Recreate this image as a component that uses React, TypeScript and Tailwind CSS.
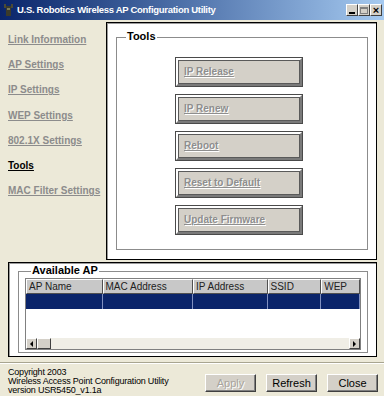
import React from "react";

const navItems = [
  "Link Information",
  "AP Settings",
  "IP Settings",
  "WEP Settings",
  "802.1X Settings",
  "Tools",
  "MAC Filter Settings",
];

const toolButtons = ["IP Release", "IP Renew", "Reboot", "Reset to Default", "Update Firmware"];

const cols = [
  { name: "AP Name", w: 77 },
  { name: "MAC Address", w: 91 },
  { name: "IP Address", w: 75 },
  { name: "SSID", w: 54 },
  { name: "WEP", w: 39 },
];

function WinBtn({ children }: { children: React.ReactNode }) {
  return (
    <div className="w-[12px] h-[12px] bg-[#d4d0c8] border border-t-white border-l-white border-r-[#404040] border-b-[#404040] flex items-center justify-center">
      {children}
    </div>
  );
}

function ToolButton({ label }: { label: string }) {
  return (
    <div className="w-[128px] h-[30px] border border-[#4a4a4a] bg-[#d4d0c8]">
      <div className="w-full h-full border-2 border-t-white border-l-white border-r-[#7a7a7a] border-b-[#7a7a7a]">
        <div className="w-full h-full border border-[#5a5a5a] bg-[#d4d0c8] flex items-center pl-[5px]">
          <span className="text-[10px] font-bold underline text-[#8e8e8e] [text-shadow:1px_1px_0_#ffffff] leading-none">
            {label}
          </span>
        </div>
      </div>
    </div>
  );
}

function FootButton({ label, disabled }: { label: string; disabled?: boolean }) {
  return (
    <div className="w-[51px] h-[18px] bg-[#d4d0c8] border border-t-white border-l-white border-r-[#404040] border-b-[#404040] flex items-center justify-center shadow-[inset_-1px_-1px_0_#808080]">
      <span
        className={
          disabled
            ? "text-[11px] text-[#a8a49c] [text-shadow:1px_1px_0_#ffffff] leading-none"
            : "text-[11px] text-black leading-none"
        }
      >
        {label}
      </span>
    </div>
  );
}

export default function App() {
  return (
    <div
      className="w-[384px] h-[396px] bg-[#ece9d8] flex flex-col overflow-hidden"
      style={{ fontFamily: '"Liberation Sans", Arial, sans-serif' }}
    >
      {/* Title bar */}
      <div className="h-[20px] flex items-center bg-gradient-to-r from-[#0a246a] to-[#a6caf0] pl-[3px] pr-[2px]">
        <svg width="11" height="14" viewBox="0 0 11 14" className="mr-[3px]">
          <rect x="3" y="3" width="5" height="10" fill="#3b3b2b" />
          <rect x="1" y="1" width="2" height="4" fill="#4a4a36" />
          <rect x="8" y="1" width="2" height="4" fill="#4a4a36" />
          <rect x="4" y="5" width="3" height="2" fill="#7a7a5a" />
        </svg>
        <span className="text-[9.5px] font-bold text-white tracking-[-0.3px] leading-none">
          U.S. Robotics Wireless AP Configuration Utility
        </span>
        <div className="ml-auto flex">
          <WinBtn>
            <div className="w-[6px] h-[2px] bg-black mt-[5px]" />
          </WinBtn>
          <WinBtn>
            <div className="w-[8px] h-[7px] border border-[#808080] border-t-2" />
          </WinBtn>
          <WinBtn>
            <span className="text-[11px] font-bold leading-none text-black">×</span>
          </WinBtn>
        </div>
      </div>

      {/* Top area */}
      <div className="flex pt-[2px] pr-[7px]">
        <div className="w-[106px] flex flex-col pl-[8px] pt-[11px] gap-[11.2px]">
          {navItems.map((n) => (
            <span
              key={n}
              className={
                n === "Tools"
                  ? "text-[10px] font-bold underline text-black leading-[14px] whitespace-nowrap"
                  : "text-[10px] font-bold underline text-[#8c8c8c] leading-[14px] whitespace-nowrap"
              }
            >
              {n}
            </span>
          ))}
        </div>
        <div className="w-[271px] h-[238px] bg-white border border-black shadow-[inset_1px_1px_0_#9a9a9a] pl-[9px] pr-[8px] pt-[14px] pb-[9px]">
          <div className="relative w-full h-full border border-[#8c8c8c] flex flex-col items-center pt-[19px] gap-[7px] pr-[6px]">
            <span className="absolute -top-[7px] left-[9px] bg-white px-[1px] text-[11px] font-bold text-black leading-none">
              Tools
            </span>
            {toolButtons.map((b) => (
              <ToolButton key={b} label={b} />
            ))}
          </div>
        </div>
      </div>

      {/* Available AP */}
      <div className="ml-[8px] mr-[7px] mt-[2px] h-[95px] bg-white border border-black shadow-[inset_1px_1px_0_#9a9a9a] pl-[9px] pr-[8px] pt-[8px] pb-[3px]">
        <div className="relative w-full h-full border border-[#8c8c8c] pl-[6px] pr-[6px] pt-[6px]">
          <span className="absolute -top-[7px] left-[12px] bg-white px-[1px] text-[11px] font-bold text-black leading-none">
            Available AP
          </span>
          <div className="w-[336px] border border-[#808080] flex flex-col">
            <div className="flex h-[15px]">
              {cols.map((c) => (
                <div
                  key={c.name}
                  style={{ width: c.w }}
                  className="h-full bg-[#c8c8c8] border border-t-white border-l-white border-r-[#505050] border-b-[#505050] flex items-center pl-[2px]"
                >
                  <span className="text-[10px] text-[#222] leading-none">{c.name}</span>
                </div>
              ))}
            </div>
            <div className="flex h-[15px] bg-[#0a246a]">
              {cols.map((c) => (
                <div key={c.name} style={{ width: c.w }} className="h-full border-r border-[#8090c0]" />
              ))}
            </div>
            <div className="h-[29px] bg-white" />
            <div className="h-[11px] bg-[#ece9d8] flex items-stretch">
              <div className="w-[11px] bg-[#d4d0c8] border border-t-white border-l-white border-r-[#404040] border-b-[#404040] flex items-center justify-center">
                <div className="w-0 h-0 border-y-[3px] border-y-transparent border-r-[3px] border-r-black" />
              </div>
              <div className="w-[14px] bg-[#d4d0c8] border border-t-white border-l-white border-r-[#404040] border-b-[#404040]" />
              <div className="flex-1 bg-[#f0eee6]" />
              <div className="w-[11px] bg-[#d4d0c8] border border-t-white border-l-white border-r-[#404040] border-b-[#404040] flex items-center justify-center">
                <div className="w-0 h-0 border-y-[3px] border-y-transparent border-l-[3px] border-l-black" />
              </div>
            </div>
          </div>
        </div>
      </div>

      {/* Separator */}
      <div className="mt-[5px] h-[2px] border-t border-[#a8a590] border-b border-b-white" />

      {/* Footer */}
      <div className="flex items-start pl-[8px] pr-[6px] pt-[4px]">
        <div className="flex flex-col text-[9px] leading-[9px] text-black" style={{ letterSpacing: "-0.2px" }}>
          <span>Copyright 2003</span>
          <span>Wireless Access Point Configuration Utility</span>
          <span>version USR5450_v1.1a</span>
        </div>
        <div className="ml-auto flex gap-[10px] mt-[6px]">
          <FootButton label="Apply" disabled />
          <FootButton label="Refresh" />
          <FootButton label="Close" />
        </div>
      </div>
    </div>
  );
}
